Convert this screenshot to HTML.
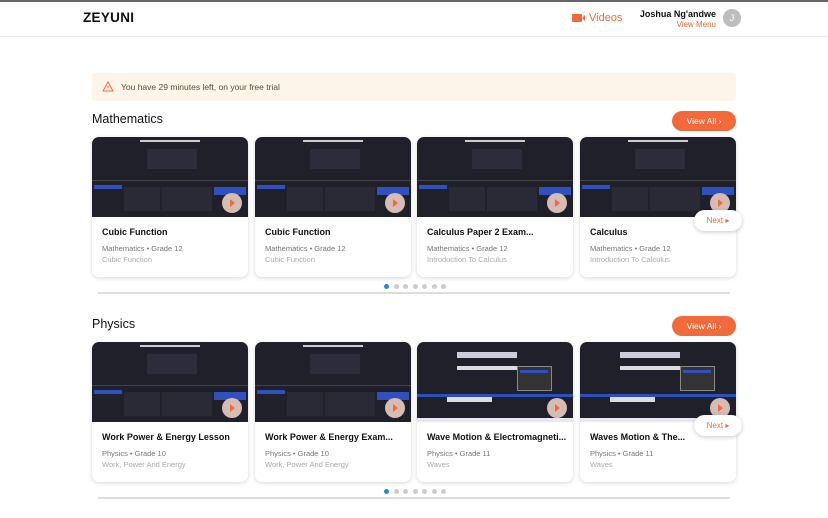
<!DOCTYPE html><html><head><meta charset="utf-8"><style>
*{box-sizing:border-box;margin:0;padding:0}
body{width:828px;height:518px;overflow:hidden;background:#fff;font-family:"Liberation Sans",sans-serif;position:relative}
.top{position:absolute;left:0;top:0;width:828px;height:1.5px;background:#666;z-index:2}
.hdr{position:absolute;top:0;left:0;width:828px;height:37px;border-bottom:1px solid #e8e8e8}
.logo{position:absolute;left:83px;top:10px;font-weight:bold;font-size:13.5px;letter-spacing:.3px;color:#111}
.vid{position:absolute;left:572px;top:12px;color:#f26a3b;font-size:11px}
.vid i{display:inline-block;width:10px;height:8px;background:#f26a3b;border-radius:1px;margin-right:7px;vertical-align:-1px;position:relative}
.vid i:after{content:"";position:absolute;right:-3px;top:1px;border:3px solid transparent;border-right:3px solid #f26a3b}
.usr{position:absolute;right:112px;top:9px;text-align:right;font-size:9px;font-weight:bold;color:#111}
.usr span{display:block;color:#f26a3b;font-weight:normal;font-size:8px;margin-top:1px}
.av{position:absolute;left:723px;top:9px;width:18px;height:18px;border-radius:50%;background:#bdbdbd;color:#fff;font-size:9px;text-align:center;line-height:18px}
.alert{position:absolute;left:92px;top:73px;width:644px;height:28px;background:#fdf5e8;border-radius:3px;font-size:8.5px;color:#5a4a36;padding:9px 0 0 29px}
.alert svg{position:absolute;left:10px;top:8px}
h2{position:absolute;left:92px;font-size:12.5px;font-weight:normal;color:#111}
.va{position:absolute;left:672px;width:64px;height:20px;border-radius:10px;background:#f26a3b;color:#fff;font-size:8.5px;text-align:center;line-height:20px}
.card{position:absolute;width:156px;height:140px;border-radius:7px;background:#fff;box-shadow:0 1px 4px rgba(0,0,0,.16);overflow:hidden}
.th{height:80px;background:#20202b;position:relative}
.th b{position:absolute;display:block}
.pl{position:absolute;left:130px;top:56px;width:20px;height:20px;border-radius:50%;background:#d7bcb4}
.pl:after{content:"";position:absolute;left:8px;top:6px;border:4px solid transparent;border-left:5px solid #f26a3b}
.t{font-size:9px;font-weight:bold;color:#111;margin:10px 0 0 10px;white-space:nowrap}
.m{font-size:7.5px;color:#777;margin:7px 0 0 10px}
.s{font-size:7.5px;color:#aaa;margin:2px 0 0 10px}
.nx{position:absolute;left:694px;width:48px;height:21px;border-radius:11px;background:#fff;box-shadow:0 1px 4px rgba(0,0,0,.22);color:#f26a3b;font-size:8px;text-align:center;line-height:21px}
.dots{position:absolute;left:384px;font-size:0;line-height:0;height:5px}
.dots i{display:inline-block;width:5px;height:5px;border-radius:50%;background:#ccc;margin-right:4.5px}
.dots i:first-child{background:#1e88e5}
.bar{position:absolute;left:98px;width:632px;height:2px;background:#ddd}
</style></head><body>
<div class="top"></div>
<div class="hdr"><div class="logo">ZEYUNI</div><div class="vid"><i></i>Videos</div><div class="usr">Joshua Ng'andwe<span>View Menu</span></div><div class="av">J</div></div>
<div class="alert"><svg width="12" height="11" viewBox="0 0 12 11"><path d="M6 1L11 10H1Z M6 4.5V7 M6 8.3V8.6" fill="none" stroke="#f26a3b" stroke-width="1"/></svg>You have 29 minutes left, on your free trial</div>

<h2 style="top:112px">Mathematics</h2><div class="va" style="top:111px">View All &#8250;</div>
<h2 style="top:317px">Physics</h2><div class="va" style="top:316px">View All &#8250;</div>

<div class="card" style="left:92px;top:137px"><div class="th"><b style="left:48px;top:3px;width:60px;height:2px;background:#ccc"></b><b style="left:55px;top:12px;width:50px;height:20px;background:#2c2c3a"></b><b style="left:0;top:43px;width:156px;height:1px;background:#444"></b><b style="left:2px;top:48px;width:28px;height:4px;background:#3050c0"></b><b style="left:32px;top:50px;width:36px;height:24px;background:#2a2a36"></b><b style="left:70px;top:50px;width:50px;height:24px;background:#2a2a36"></b><b style="left:122px;top:50px;width:32px;height:8px;background:#3050c0"></b></div><div class="pl"></div><div class="t">Cubic Function</div><div class="m">Mathematics • Grade 12</div><div class="s">Cubic Function</div></div>
<div class="card" style="left:255px;top:137px"><div class="th"><b style="left:48px;top:3px;width:60px;height:2px;background:#ccc"></b><b style="left:55px;top:12px;width:50px;height:20px;background:#2c2c3a"></b><b style="left:0;top:43px;width:156px;height:1px;background:#444"></b><b style="left:2px;top:48px;width:28px;height:4px;background:#3050c0"></b><b style="left:32px;top:50px;width:36px;height:24px;background:#2a2a36"></b><b style="left:70px;top:50px;width:50px;height:24px;background:#2a2a36"></b><b style="left:122px;top:50px;width:32px;height:8px;background:#3050c0"></b></div><div class="pl"></div><div class="t">Cubic Function</div><div class="m">Mathematics • Grade 12</div><div class="s">Cubic Function</div></div>
<div class="card" style="left:417px;top:137px"><div class="th"><b style="left:48px;top:3px;width:60px;height:2px;background:#ccc"></b><b style="left:55px;top:12px;width:50px;height:20px;background:#2c2c3a"></b><b style="left:0;top:43px;width:156px;height:1px;background:#444"></b><b style="left:2px;top:48px;width:28px;height:4px;background:#3050c0"></b><b style="left:32px;top:50px;width:36px;height:24px;background:#2a2a36"></b><b style="left:70px;top:50px;width:50px;height:24px;background:#2a2a36"></b><b style="left:122px;top:50px;width:32px;height:8px;background:#3050c0"></b></div><div class="pl"></div><div class="t">Calculus Paper 2 Exam...</div><div class="m">Mathematics • Grade 12</div><div class="s">Introduction To Calculus</div></div>
<div class="card" style="left:580px;top:137px"><div class="th"><b style="left:48px;top:3px;width:60px;height:2px;background:#ccc"></b><b style="left:55px;top:12px;width:50px;height:20px;background:#2c2c3a"></b><b style="left:0;top:43px;width:156px;height:1px;background:#444"></b><b style="left:2px;top:48px;width:28px;height:4px;background:#3050c0"></b><b style="left:32px;top:50px;width:36px;height:24px;background:#2a2a36"></b><b style="left:70px;top:50px;width:50px;height:24px;background:#2a2a36"></b><b style="left:122px;top:50px;width:32px;height:8px;background:#3050c0"></b></div><div class="pl"></div><div class="t">Calculus</div><div class="m">Mathematics • Grade 12</div><div class="s">Introduction To Calculus</div></div>
<div class="nx" style="top:210px">Next &#9656;</div>
<div class="dots" style="top:284px"><i></i><i></i><i></i><i></i><i></i><i></i><i></i></div>
<div class="bar" style="top:292px"></div>

<div class="card" style="left:92px;top:342px"><div class="th"><b style="left:48px;top:3px;width:60px;height:2px;background:#ccc"></b><b style="left:55px;top:12px;width:50px;height:20px;background:#2c2c3a"></b><b style="left:0;top:43px;width:156px;height:1px;background:#444"></b><b style="left:2px;top:48px;width:28px;height:4px;background:#3050c0"></b><b style="left:32px;top:50px;width:36px;height:24px;background:#2a2a36"></b><b style="left:70px;top:50px;width:50px;height:24px;background:#2a2a36"></b><b style="left:122px;top:50px;width:32px;height:8px;background:#3050c0"></b></div><div class="pl"></div><div class="t">Work Power &amp; Energy Lesson</div><div class="m">Physics • Grade 10</div><div class="s">Work, Power And Energy</div></div>
<div class="card" style="left:255px;top:342px"><div class="th"><b style="left:48px;top:3px;width:60px;height:2px;background:#ccc"></b><b style="left:55px;top:12px;width:50px;height:20px;background:#2c2c3a"></b><b style="left:0;top:43px;width:156px;height:1px;background:#444"></b><b style="left:2px;top:48px;width:28px;height:4px;background:#3050c0"></b><b style="left:32px;top:50px;width:36px;height:24px;background:#2a2a36"></b><b style="left:70px;top:50px;width:50px;height:24px;background:#2a2a36"></b><b style="left:122px;top:50px;width:32px;height:8px;background:#3050c0"></b></div><div class="pl"></div><div class="t">Work Power &amp; Energy Exam...</div><div class="m">Physics • Grade 10</div><div class="s">Work, Power And Energy</div></div>
<div class="card" style="left:417px;top:342px"><div class="th"><b style="left:40px;top:10px;width:60px;height:6px;background:#ccd"></b><b style="left:40px;top:24px;width:70px;height:4px;background:#ddd"></b><b style="left:100px;top:24px;width:35px;height:25px;background:#333;border:1px solid #888"></b><b style="left:103px;top:28px;width:28px;height:3px;background:#3050c0"></b><b style="left:0;top:52px;width:156px;height:3px;background:#2a50c0"></b><b style="left:30px;top:55px;width:45px;height:5px;background:#ddd"></b><b style="left:0;top:76px;width:156px;height:4px;background:#e8e8f0"></b></div><div class="pl"></div><div class="t">Wave Motion &amp; Electromagneti...</div><div class="m">Physics • Grade 11</div><div class="s">Waves</div></div>
<div class="card" style="left:580px;top:342px"><div class="th"><b style="left:40px;top:10px;width:60px;height:6px;background:#ccd"></b><b style="left:40px;top:24px;width:70px;height:4px;background:#ddd"></b><b style="left:100px;top:24px;width:35px;height:25px;background:#333;border:1px solid #888"></b><b style="left:103px;top:28px;width:28px;height:3px;background:#3050c0"></b><b style="left:0;top:52px;width:156px;height:3px;background:#2a50c0"></b><b style="left:30px;top:55px;width:45px;height:5px;background:#ddd"></b><b style="left:0;top:76px;width:156px;height:4px;background:#e8e8f0"></b></div><div class="pl"></div><div class="t">Waves Motion &amp; The...</div><div class="m">Physics • Grade 11</div><div class="s">Waves</div></div>
<div class="nx" style="top:415px">Next &#9656;</div>
<div class="dots" style="top:489px"><i></i><i></i><i></i><i></i><i></i><i></i><i></i></div>
<div class="bar" style="top:497px"></div>
</body></html>
